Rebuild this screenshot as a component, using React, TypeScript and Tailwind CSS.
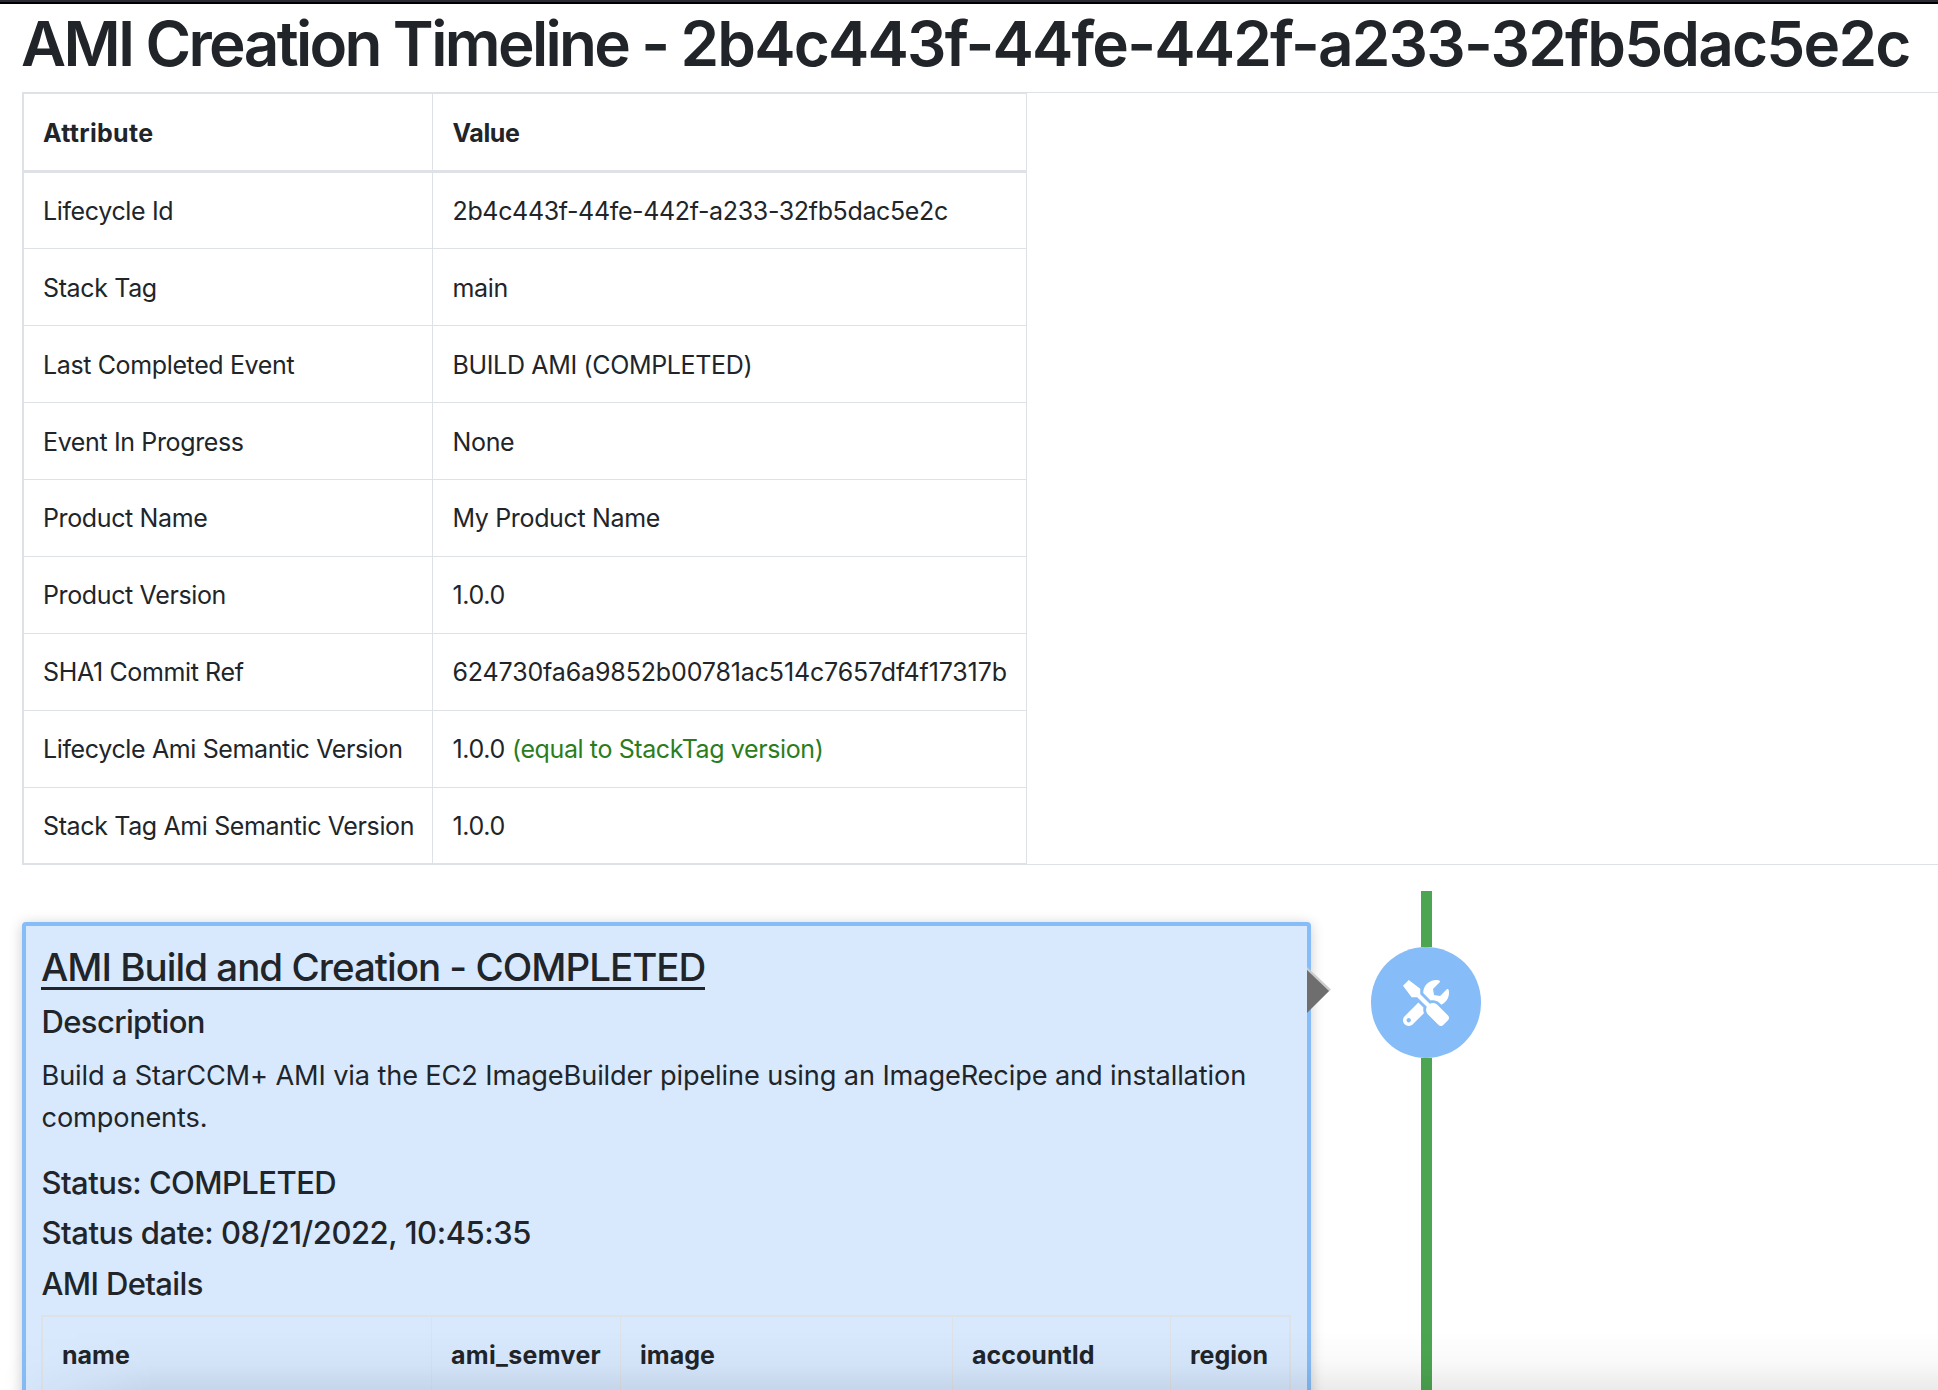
import { FaTools } from "react-icons/fa";

type Row = { name: string; value: string; valueClass?: string; note?: string };

const rows: Row[] = [
  { name: "Lifecycle Id", value: "2b4c443f-44fe-442f-a233-32fb5dac5e2c" },
  { name: "Stack Tag", value: "main" },
  { name: "Last Completed Event", value: "BUILD AMI (COMPLETED)" },
  { name: "Event In Progress", value: "None" },
  { name: "Product Name", value: "My Product Name" },
  { name: "Product Version", value: "1.0.0" },
  { name: "SHA1 Commit Ref", value: "624730fa6a9852b00781ac514c7657df4f17317b", valueClass: "tracking-[-0.14px]" },
  { name: "Lifecycle Ami Semantic Version", value: "1.0.0", note: "(equal to StackTag version)" },
  { name: "Stack Tag Ami Semantic Version", value: "1.0.0" },
];

function AttributeTable() {
  return (
    <table className="h-[773px] w-[1005px] table-fixed border-collapse border-2 border-r border-[#dee2e6] text-left text-[25px] leading-[38px] tracking-[-0.37px]">
      <thead>
        <tr className="h-[78px] border-b-[3px] border-[#dee2e6] font-bold">
          <th className="w-[409px] border-r border-[#dee2e6] pt-[3px] pl-[19px] tracking-[0.3px]">Attribute</th>
          <th className="pt-[3px] pl-5">Value</th>
        </tr>
      </thead>
      <tbody>
        {rows.map((row) => (
          <tr key={row.name} className="h-[76.8px] border-b border-[#dee2e6] first:h-[77.5px] last:h-[76.5px]">
            <td className="border-r border-[#dee2e6] pt-px pl-[19px]">{row.name}</td>
            <td className="pt-px pl-5 tracking-[-0.35px]">
              <span className={row.valueClass}>{row.value}</span>
              {row.note && <span className="ml-[7px] tracking-[-0.39px] text-[#2b7d1c]">{row.note}</span>}
            </td>
          </tr>
        ))}
      </tbody>
    </table>
  );
}

function BuildCard() {
  return (
    <section className="relative mt-[31px] h-[600px] w-[1289px] rounded-[4px] border-4 border-[#86bcf7] bg-[#d8e9fe] px-[15px] pt-[17px] shadow-[0_2px_14px_rgba(0,0,0,0.2)]">
      <h3 className="text-[38.5px] leading-[48px] font-medium tracking-[-0.98px]">
        <span className="inline-block h-[47px] border-b-[3px] border-[#212529]">AMI Build and Creation - COMPLETED</span>
      </h3>
      <div className="pl-[0.5px]">
        <h4 className="mt-[12px] text-[31px] leading-[38px] font-medium tracking-[-0.63px]">Description</h4>
        <p className="mt-[14px] text-[27.2px] leading-[42px] tracking-[-0.13px] whitespace-nowrap">
          Build a StarCCM+ AMI via the EC2 ImageBuilder pipeline using an ImageRecipe and installation
          <br />
          components.
        </p>
        <h4 className="mt-[25px] text-[31px] leading-[38px] font-medium tracking-[-0.56px]">Status: COMPLETED</h4>
        <h4 className="mt-[12px] text-[31px] leading-[38px] font-medium tracking-[-0.45px]">
          Status date: 08/21/2022, 10:45:35
        </h4>
        <h4 className="mt-[13px] text-[31px] leading-[38px] font-medium tracking-[-0.63px]">AMI Details</h4>
      </div>
      <div className="mt-[12px] grid h-[140px] w-[1250px] grid-cols-[389px_189px_332px_218px_118px] border-2 border-[#dee2e6] text-[25px] leading-[77px] font-bold">
        {["name", "ami_semver", "image", "accountId", "region"].map((column) => (
          <div key={column} className="border-r border-[#dee2e6] pl-[19px] tracking-[0.02px] last:border-r-0 nth-2:tracking-[0.32px]">
            {column}
          </div>
        ))}
      </div>
      <svg className="absolute top-[41px] -right-[24px] h-[47px] w-[24px]" viewBox="0 0 24 47">
        <path d="M0 0 L24 22.5 L0 45 Z" fill="#cccccc" />
        <path d="M0 3 L22 24 L0 46 Z" fill="#6e6e6e" />
      </svg>
    </section>
  );
}

export default function App() {
  return (
    <div className="relative h-[1390px] w-[1938px] overflow-hidden bg-white font-['Inter',sans-serif] text-[#212529]">
      <div className="h-1 border-b-2 border-black bg-[#292a33]" />
      <h1 className="ml-[21px] h-[88px] text-[62px] leading-[80px] font-semibold tracking-[-2.65px] whitespace-nowrap">
        AMI Creation Timeline - <span className="tracking-[-1.8px]">2b4c443f-44fe-442f-a233-32fb5dac5e2c</span>
      </h1>
      <div className="ml-[22px] h-[773px] border-y border-[#dee2e6]">
        <div className="-my-px">
          <AttributeTable />
        </div>
      </div>
      <main className="flex pt-[26px] pl-[22px]">
        <BuildCard />
        <div className="ml-[60px] flex w-[110px] flex-col items-center">
          <div className="h-[56px] w-[11px] bg-[#4ca651]" />
          <div className="flex h-[111px] w-[110px] shrink-0 items-center justify-center rounded-full bg-[#86bcf7] text-white">
            <FaTools className="size-[46px]" />
          </div>
          <div className="h-[400px] w-[11px] bg-[#4ca651]" />
        </div>
      </main>
      <div className="pointer-events-none absolute bottom-0 left-0 h-[60px] w-full bg-linear-to-b from-transparent via-black/2 to-black/8 mask-l-from-92%" />
    </div>
  );
}
